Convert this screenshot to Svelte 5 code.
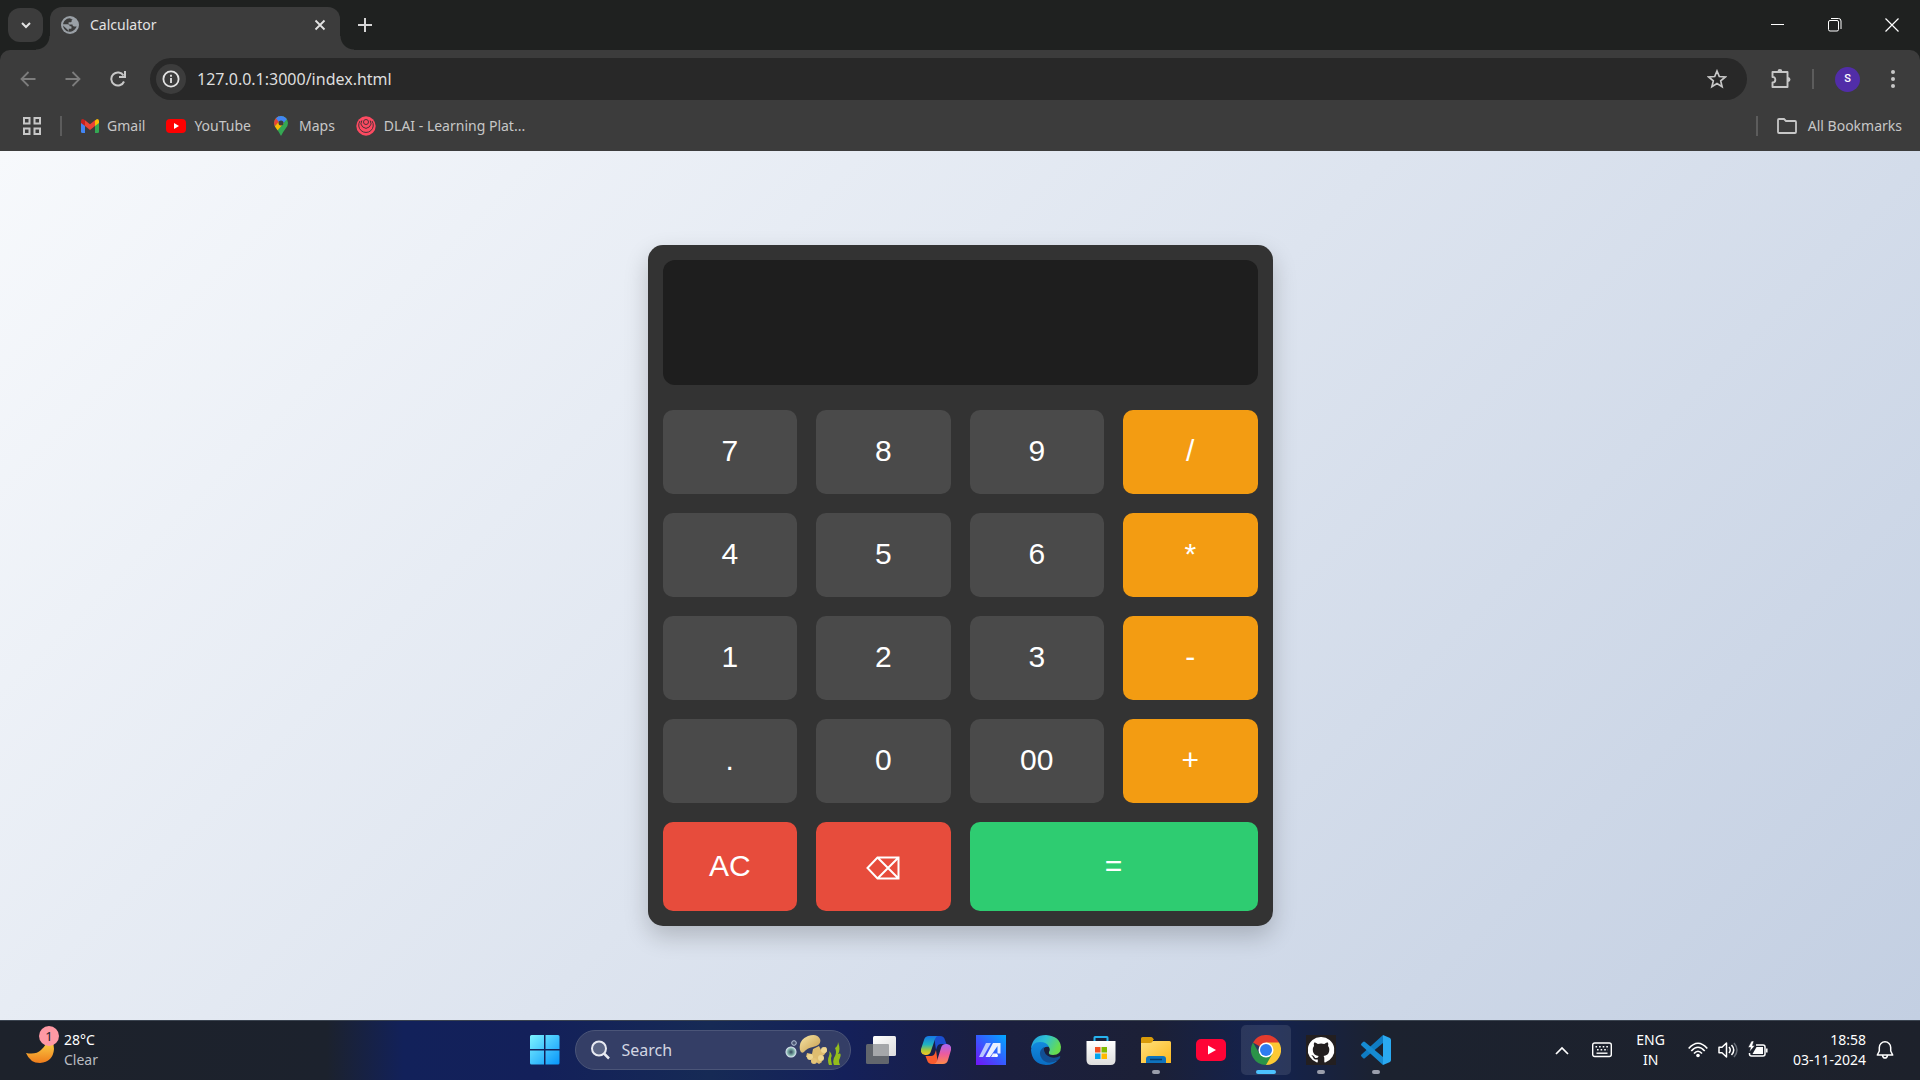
<script>
  const keys = [
    ['7', 'num'], ['8', 'num'], ['9', 'num'], ['/', 'op'],
    ['4', 'num'], ['5', 'num'], ['6', 'num'], ['*', 'op'],
    ['1', 'num'], ['2', 'num'], ['3', 'num'], ['-', 'op'],
    ['.', 'num'], ['0', 'num'], ['00', 'num'], ['+', 'op'],
    ['AC', 'clear'], ['⌫', 'clear back'], ['=', 'equals']
  ];

  let expression = $state('');

  // Evaluates left to right with * and / binding tighter than + and -.
  function evaluate(source) {
    const tokens = source.match(/\d*\.?\d+|[-+*/]/g) ?? [];
    const terms = [];
    let sign = 1;
    let pending = null;
    for (const token of tokens) {
      if (token === '+' || token === '-') sign = token === '-' ? -1 : 1;
      else if (token === '*' || token === '/') pending = token;
      else {
        const value = Number(token);
        if (pending === '*') terms.push(terms.pop() * value);
        else if (pending === '/') terms.push(terms.pop() / value);
        else terms.push(sign * value);
        pending = null;
        sign = 1;
      }
    }
    return String(terms.reduce((sum, term) => sum + term, 0));
  }

  function press(key) {
    if (key === 'AC') expression = '';
    else if (key === '⌫') expression = expression.slice(0, -1);
    else if (key === '=') expression = expression && evaluate(expression);
    else expression += key;
  }
</script>

<div class="screen">
  <header class="browser">
    <div class="tabstrip">
      <button class="tab-search" aria-label="Search tabs">
        <svg width="12" height="12" viewBox="0 0 12 12"><path d="M2 4l4 4 4-4" fill="none" stroke="#e3e3e3" stroke-width="2" /></svg>
      </button>
      <div class="tab">
        <svg width="18" height="18" viewBox="0 0 18 18">
          <circle cx="9" cy="9" r="9" fill="#9aa0a6" />
          <path d="M8.500 2.200C5 2.500 2.500 5 2 8.500h4.500c1.500 0 2 .8 2 2h1.800v2H7.500v3.300c3.500 .4 7-2 8.200-5.300h-2.400c-1.200 0-1.800-.8-1.800-2H7.600V6.200h1.600c1 0 1.500-.5 1.500-1.500V3.500h1.500" fill="#3c3c3c" />
          <path d="M2 8.500h4.500c1.500 0 2 .8 2 2h1.800v2H7.500v3.300C4 15.200 1.800 12 2 8.500z" fill="#9aa0a6" />
          <path d="M2 9.500l5.500 5v1.300C4.500 15 2.300 12.500 2 9.500z" fill="#3c3c3c" />
        </svg>
        <span class="tab-title">Calculator</span>
        <button class="plain" aria-label="Close tab">
          <svg width="12" height="12" viewBox="0 0 12 12"><path d="M1.500 1.500l9 9m0-9l-9 9" stroke="#e3e3e3" stroke-width="1.800" /></svg>
        </button>
      </div>
      <button class="plain new-tab" aria-label="New tab">
        <svg width="14" height="14" viewBox="0 0 14 14"><path d="M7 0v14M0 7h14" stroke="#d6d6d6" stroke-width="2" /></svg>
      </button>
      <div class="window-controls">
        <button aria-label="Minimize"><svg width="14" height="14" viewBox="0 0 14 14"><path d="M0 6.500h13" stroke="#fff" /></svg></button>
        <button aria-label="Restore"><svg width="14" height="14" viewBox="0 0 14 14" fill="none" stroke="#fff"><rect x=".5" y="2.500" width="10" height="10.500" rx="1.500" /><path d="M3 .5h7.500q2.500 0 2.500 2.500v8" /></svg></button>
        <button aria-label="Close"><svg width="14" height="14" viewBox="0 0 14 14"><path d="M.5 .5l13 13m0-13l-13 13" stroke="#fff" stroke-width="1.200" /></svg></button>
      </div>
    </div>

    <div class="panel">
      <div class="toolbar">
        <nav class="nav" aria-label="History">
          <button class="plain" aria-label="Back"><svg width="16" height="16" viewBox="0 0 16 16" fill="none" stroke="#7d7d7d" stroke-width="1.800"><path d="M15.500 8H2M8.500 1L1.500 8l7 7" /></svg></button>
          <button class="plain" aria-label="Forward"><svg width="16" height="16" viewBox="0 0 16 16" fill="none" stroke="#7d7d7d" stroke-width="1.800"><path d="M.5 8H14M7.500 1l7 7-7 7" /></svg></button>
          <button class="plain" aria-label="Reload"><svg width="16" height="16" viewBox="0 0 16 16" fill="none" stroke="#c7c7c7" stroke-width="2"><path d="M14 10.500A6.600 6.600 0 1 1 13.500 4.500M15 0v6H9" /></svg></button>
        </nav>
        <div class="address">
          <button class="site-info" aria-label="Site information">
            <svg width="18" height="18" viewBox="0 0 18 18"><circle cx="9" cy="9" r="7.600" fill="none" stroke="#e3e3e3" stroke-width="1.800" /><path d="M9 8v5M9 4.800v2" stroke="#e3e3e3" stroke-width="1.800" /></svg>
          </button>
          <input aria-label="Address" value="127.0.0.1:3000/index.html" />
          <button class="plain" aria-label="Bookmark this tab">
            <svg width="20" height="20" viewBox="0 0 20 20"><path d="M10 2l2.300 5.500 6 .5-4.600 3.900 1.400 5.800L10 14.600l-5.100 3.100 1.400-5.800L1.700 8l6-.5z" fill="none" stroke="#c7c7c7" stroke-width="1.700" /></svg>
          </button>
        </div>
        <button class="plain extensions" aria-label="Extensions">
          <svg width="22" height="22" viewBox="0 0 22 22"><path d="M2.500 4h15v15h-15v-4.500q2.800 0 2.800-2.800T2.500 9z" fill="none" stroke="#c7c7c7" stroke-width="1.900" stroke-linejoin="round" /><path d="M7.500 3.500a2.400 2.400 0 0 1 4.800 0zM18 9a2.500 2.500 0 0 1 0 5z" fill="#c7c7c7" /></svg>
        </button>
        <span class="rule"></span>
        <button class="avatar" aria-label="Profile">S</button>
        <button class="plain menu" aria-label="Menu">
          <svg width="6" height="20" viewBox="0 0 6 20" fill="#c7c7c7"><circle cx="3" cy="3" r="2" /><circle cx="3" cy="10" r="2" /><circle cx="3" cy="17" r="2" /></svg>
        </button>
      </div>

      <nav class="bookmarks" aria-label="Bookmarks">
        <button class="plain" aria-label="Apps">
          <svg width="18" height="18" viewBox="0 0 18 18" fill="none" stroke="#c7c7c7" stroke-width="2"><path d="M1 1h5.500v5.500H1zM11.500 1H17v5.500h-5.500zM1 11.500h5.500V17H1zM11.500 11.500H17V17h-5.500z" /></svg>
        </button>
        <span class="rule"></span>
        <a href="#gmail">
          <svg width="18" height="14" viewBox="0 0 18 14"><path d="M0 3v9.500Q0 14 1.300 14H4V6z" fill="#4285f4" /><path d="M18 3v9.500q0 1.500-1.300 1.500H14V6z" fill="#34a853" /><path d="M14 1.500V7l4-3V2q0-2-2-2z" fill="#fbbc04" /><path d="M0 2q0-2 2-1.900L4 1.300V7L0 4z" fill="#c5221f" /><path d="M4 1.300l5 3.900 5-3.900V7l-5 4-5-4z" fill="#ea4335" /></svg>
          Gmail
        </a>
        <a href="#youtube">
          <svg width="20" height="14" viewBox="0 0 20 14"><rect width="20" height="14" rx="4" fill="#f00" /><path d="M8 4l5 3-5 3z" fill="#fff" /></svg>
          YouTube
        </a>
        <a href="#maps" class="maps">
          <svg width="14" height="20" viewBox="0 0 14 20"><defs><clipPath id="pin"><path d="M7 0a7 7 0 0 1 7 7q0 3-2.500 5.800Q9 16 7 20 5 16 2.500 12.800 0 10 0 7a7 7 0 0 1 7-7z" /></clipPath></defs><g clip-path="url(#pin)"><path d="M0 0h14v20H0z" fill="#34a853" /><path d="M0 11L5 5l5 2-7 8z" fill="#fbbc04" /><path d="M0 0h5v5.500L0 11z" fill="#ea4335" /><path d="M2 2.500L4 0h10v2L7.500 9z" fill="#4285f4" /></g><circle cx="7" cy="7" r="2.500" fill="#3c3c3c" /></svg>
          Maps
        </a>
        <a href="#dlai">
          <svg width="20" height="20" viewBox="0 0 20 20"><circle cx="10" cy="10" r="9.700" fill="#fd4a61" /><g fill="none" stroke="#4a3238" stroke-width="1"><path d="M4 5a7.300 7.300 0 1 0 12 0" /><path d="M5.800 4.500a5 5 0 1 0 8.400 0" /><circle cx="10" cy="6" r="2.500" /></g></svg>
          DLAI - Learning Plat...
        </a>
        <span class="rule push"></span>
        <a href="#all" class="all">
          <svg width="20" height="16" viewBox="0 0 20 16"><path d="M1 13V2q0-1 1-1h5l2 2h9q1 0 1 1v10q0 1-1 1H2q-1 0-1-1z" fill="none" stroke="#c7c7c7" stroke-width="1.800" /></svg>
          All Bookmarks
        </a>
      </nav>
    </div>
  </header>

  <main class="page">
    <section class="calculator" aria-label="Calculator">
      <output class="display">{expression}</output>
      <div class="keypad">
        {#each keys as [label, kind]}
          <button class={kind} onclick={() => press(label)}>
            {#if label === '⌫'}
              <svg width="34" height="24" viewBox="0 0 34 24" role="img" aria-label="Backspace"><path d="M1.500 12L11.500 1.500H32.500v21H11.500zM11.500 1.500l21 21M32.500 1.500l-21 21" fill="none" stroke="#fff" stroke-width="2" /></svg>
            {:else}{label}{/if}
          </button>
        {/each}
      </div>
    </section>
  </main>

  <footer class="taskbar">
    <button class="weather">
      <span class="moon">
        <svg width="28" height="28" viewBox="0 0 28 28"><defs><linearGradient id="moon" x2="0" y2="1"><stop offset=".3" stop-color="#f8c440" /><stop offset="1" stop-color="#ef7d1c" /></linearGradient></defs><path d="M22 1Q28 5 28 13 27 26 14 27 4 27 0 17q10 2 15-3 6-5 7-13z" fill="url(#moon)" /></svg>
        <span class="badge">1</span>
      </span>
      <span class="stack"><span>28°C</span><span class="dim">Clear</span></span>
    </button>

    <div class="apps">
      <button class="app" aria-label="Start">
        <svg width="30" height="30" viewBox="0 0 30 30"><defs><linearGradient id="win" x2="1" y2="1"><stop stop-color="#7df3ff" /><stop offset="1" stop-color="#0795fb" /></linearGradient></defs><path d="M1.500 0H14v14H0V1.500Q0 0 1.500 0zM15.500 0H28q1.500 0 1.500 1.500V14h-14zM0 15.500h14v14H1.500Q0 29.500 0 28zM15.500 15.500h14V28q0 1.500-1.500 1.500H15.500z" fill="url(#win)" /></svg>
      </button>
      <label class="search">
        <svg width="20" height="20" viewBox="0 0 20 20" fill="none" stroke="#e8eaf2" stroke-width="2"><circle cx="9" cy="8.500" r="7" fill="#5b6585" /><path d="M14 13.500l5 5" stroke-width="2.500" /></svg>
        <input type="text" placeholder="Search" aria-label="Search" />
        <svg width="56" height="32" viewBox="0 0 56 32">
          <defs><linearGradient id="cap" x2="1" y2="1"><stop stop-color="#f7e6a6" /><stop offset="1" stop-color="#c79b4c" /></linearGradient><radialGradient id="bubble"><stop stop-color="#33475c" /><stop offset=".6" stop-color="#7fb0a8" /><stop offset="1" stop-color="#e6eefb" /></radialGradient></defs>
          <circle cx="6" cy="18" r="5.500" fill="url(#bubble)" /><circle cx="9" cy="9" r="2.300" fill="#4a5674" stroke="#b9c8dc" />
          <path d="M28 15l6-3 2 4 5-3 1 4-3 4-4 2 2 5-3 2-3-2-4 1-1-5-5-1 1-4 5 1z" fill="#dfbd70" />
          <circle cx="25" cy="23" r="3" fill="#efd691" /><circle cx="36" cy="24" r="3" fill="#efd691" /><circle cx="39" cy="16" r="3" fill="#efd691" /><circle cx="29" cy="27" r="3" fill="#e5c478" />
          <path d="M15 16Q13 6 23 2q9-3 12 3 2 6-7 8-6 1-9 5-3 2-4-2z" fill="url(#cap)" />
          <path d="M44 31q-2-5 0-9 1-3 0-5 4 3 2 7 0 3 1 7zM49 31q-2-5 1-9 2-4 0-8 3-2 3-6 3 8 0 12 4-2 2 4-2 3 0 7z" fill="#93bd1c" />
        </svg>
      </label>
      <button class="app" aria-label="Task view">
        <svg width="30" height="28" viewBox="0 0 30 28"><defs><linearGradient id="tv" x2="1" y2="1"><stop stop-color="#fff" /><stop offset="1" stop-color="#dcdcdc" /></linearGradient></defs><rect y="8" width="23" height="20" rx="1.500" fill="#62666d" /><rect x="7" width="23" height="20" rx="1.500" fill="url(#tv)" /><path d="M7 8h15q1 0 1 1v11H7z" fill="#a5a7aa" /></svg>
      </button>
      <button class="app" aria-label="Copilot">
        <svg width="30" height="28" viewBox="0 0 30 28"><defs><linearGradient id="cp1" x2="0" y2="1"><stop stop-color="#1677e6" /><stop offset=".45" stop-color="#20b3c0" /><stop offset=".75" stop-color="#a9c837" /><stop offset="1" stop-color="#f9c725" /></linearGradient><linearGradient id="cp2" x2="0" y2="1"><stop stop-color="#a766f5" /><stop offset=".5" stop-color="#ec5b9d" /><stop offset="1" stop-color="#ff8a4a" /></linearGradient></defs>
          <path d="M13 0h6q4 0 5 4l1.500 4H20q-3 0-4 3l-1 3z" fill="#1b4fd0" /><path d="M17 28h-6q-4 0-5-4l-1.500-4H10q3 0 4-3l1-3z" fill="#fb5c2e" />
          <path d="M8 0h9q-2 0-3 3l-4 12q-1 4-5 4H4Q-1 18 0 13L3 4Q4 0 8 0z" fill="url(#cp1)" /><path d="M22 28h-9q2 0 3-3l4-13q1-4 5-4h1q5 1 4 6l-3 10q-1 4-5 4z" fill="url(#cp2)" /></svg>
      </button>
      <button class="app" aria-label="MyASUS">
        <svg width="30" height="30" viewBox="0 0 30 30"><defs><linearGradient id="asus" x1="1" x2="0" y2="1"><stop stop-color="#00a9ff" /><stop offset=".5" stop-color="#355cff" /><stop offset="1" stop-color="#7412f5" /></linearGradient></defs><path d="M0 0h30v30H0z" fill="url(#asus)" /><path d="M3 22L10 8h5L7 22z" fill="#b9c8ff" /><path d="M9.500 22L17 8h7.500v10.500h-3V11L14 22zM17 18.500h4V22h-6z" fill="#eaf0ff" /><circle cx="20.500" cy="20.500" r="1.500" fill="#fff" /></svg>
      </button>
      <button class="app" aria-label="Edge">
        <svg width="30" height="30" viewBox="0 0 30 30"><defs><linearGradient id="eg1" x2="1" y2=".4"><stop stop-color="#1f9ae0" /><stop offset=".5" stop-color="#2fc2d2" /><stop offset="1" stop-color="#66dc4f" /></linearGradient><linearGradient id="eg2" x2="0" y2="1"><stop stop-color="#128ade" /><stop offset="1" stop-color="#0a6cc2" /></linearGradient></defs><path d="M0 13Q2 0 15 0q14 1 15 12 0 8-8 8-5 0-4-3 2-3-1-6Q12 5 0 13z" fill="url(#eg1)" /><path d="M0 15Q1 7 9 7q7 0 9 5-5-1-6 3-1 8 8 11 4 1 7-1-4 5-12 5Q1 29 0 15z" fill="url(#eg2)" /><path d="M13 12q-7 5-2 12 6 7 16 1 3-2 2-4-5 3-10 1-7-3-6-10z" fill="#124f95" /></svg>
      </button>
      <button class="app" aria-label="Microsoft Store">
        <svg width="30" height="30" viewBox="0 0 30 30"><defs><linearGradient id="st" x2="0" y2="1"><stop stop-color="#fff" /><stop offset="1" stop-color="#dedede" /></linearGradient></defs><path d="M8.500 7V2.500Q8.500 2 9 2h12q.5 0 .5 .5V7" fill="none" stroke="#27b3ee" stroke-width="2" /><path d="M.5 6h29v19q0 5-5 5h-19q-5 0-5-5z" fill="url(#st)" /><path d="M9 12h5.500v5.500H9z" fill="#f25022" /><path d="M15.500 12H21v5.500h-5.500z" fill="#7fba00" /><path d="M9 18.500h5.500V24H9z" fill="#00a4ef" /><path d="M15.500 18.500H21V24h-5.500z" fill="#ffb900" /></svg>
      </button>
      <button class="app open" aria-label="File Explorer">
        <svg width="30" height="26" viewBox="0 0 30 26"><defs><linearGradient id="fe" x2="1" y2="1"><stop stop-color="#ffe07c" /><stop offset="1" stop-color="#fdb81e" /></linearGradient></defs><path d="M0 1.500Q0 0 1.500 0H10q1 0 2 1.200L13 3h-1v6H0z" fill="#d99b0a" /><path d="M0 6h9q2 0 3-2h16.500Q30 4 30 5.500V26H0z" fill="url(#fe)" /><path d="M5 26v-4q0-3 3-3h14q3 0 3 3v4z" fill="#0f73bd" /><path d="M9 22.500h12" stroke="#073b6b" stroke-width="1.500" /></svg>
      </button>
      <button class="app" aria-label="YouTube">
        <svg width="30" height="22" viewBox="0 0 30 22"><rect width="30" height="22" rx="5" fill="#ff0436" /><path d="M12 6.500l8 4.500-8 4.500z" fill="#fff" /></svg>
      </button>
      <button class="app open active" aria-label="Chrome">
        <svg width="30" height="30" viewBox="0 0 30 30"><path d="M15 15L2 7.500a15 15 0 0 1 26 0z" fill="#e33b2e" /><path d="M15 7.500h13A15 15 0 0 1 15 30z" fill="#fcc934" /><path d="M15 15l6.500 3.700L15 30A15 15 0 0 1 2 7.500l6.500 11.200z" fill="#2b9348" /><circle cx="15" cy="15" r="7.500" fill="#fff" /><circle cx="15" cy="15" r="6" fill="#2f7cf0" /></svg>
      </button>
      <button class="app open" aria-label="GitHub">
        <svg width="30" height="30" viewBox="0 0 30 30"><path d="M0 0h30v30H0z" fill="#231f20" /><path d="M15 2a13 13 0 0 0-4.100 25.400c.6 .1 .9-.3 .9-.6v-2.400c-3.600 .8-4.400-1.500-4.400-1.500-.6-1.500-1.400-1.900-1.400-1.900-1.200-.8 .1-.8 .1-.8 1.300 .1 2 1.300 2 1.300 1.200 2 3.100 1.400 3.800 1.100 .1-.8 .5-1.400 .8-1.700-2.900-.3-5.900-1.500-5.900-6.400 0-1.400 .5-2.600 1.300-3.500-.1-.3-.6-1.700 .1-3.400 0 0 1.100-.4 3.600 1.300a12.500 12.500 0 0 1 6.500 0c2.500-1.700 3.600-1.300 3.600-1.300 .7 1.800 .2 3.100 .1 3.400 .8 .9 1.300 2.100 1.300 3.500 0 5-3 6.100-5.900 6.400 .5 .4 .9 1.200 .9 2.400v3.500c0 .3 .2 .8 .9 .6A13 13 0 0 0 15 2z" fill="#fff" /></svg>
      </button>
      <button class="app open" aria-label="Visual Studio Code">
        <svg width="30" height="30" viewBox="0 0 30 30"><path d="M22 0l7 3q1 1 1 2v20q0 1-1 2l-7 3z" fill="#2aa9f1" /><path d="M22 0v8L4 23q-1 1-2 0l-1.500-1.500q-1-1 0-2z" fill="#0f7cc4" /><path d="M22 30v-8L4 7Q3 6 2 7L.5 8.500q-1 1 0 2z" fill="#168bd2" /></svg>
      </button>
    </div>

    <div class="tray">
      <button class="plain" aria-label="Hidden icons"><svg width="14" height="9" viewBox="0 0 14 9"><path d="M1 8l6-6 6 6" fill="none" stroke="#fff" stroke-width="1.700" /></svg></button>
      <button class="plain keyboard" aria-label="Touch keyboard"><svg width="20" height="16" viewBox="0 0 20 16" fill="none" stroke="#fff" stroke-width="1.400"><rect x=".7" y="1" width="18.600" height="13.500" rx="2" /><path d="M3.500 4.700h13M5 7.700h11" stroke-dasharray="1.600 2" stroke-width="1.600" /><path d="M4.500 11.200h11" /></svg></button>
      <button class="plain stack language"><span>ENG</span><span>IN</span></button>
      <button class="plain status" aria-label="Network, volume and battery">
        <svg width="20" height="16" viewBox="0 0 20 16" fill="none" stroke="#fff" stroke-width="1.700"><path d="M.7 6.500q9.300-10.500 18.600 0M3.300 9q6.700-7.500 13.400 0M6 11.500q4-4.500 8 0" /><circle cx="10" cy="13.500" r="1.800" fill="#fff" stroke="none" /></svg>
        <svg width="20" height="18" viewBox="0 0 20 18" fill="none" stroke="#fff" stroke-width="1.500"><path d="M1 6.200h3L8.500 2v14L4 11.800H1z" stroke-linejoin="round" /><path d="M11 6q2.500 3 0 6M13.500 4q4.500 5 0 10" /><path d="M16 2q6 7 0 14" stroke="#666b75" /></svg>
        <svg width="20" height="18" viewBox="0 0 20 18" fill="none" stroke="#fff" stroke-width="1.500"><path d="M8 4h7q2 0 2 2v7q0 2-2 2H3.500q-2 0-2-2v-1M18.800 7.500v4" /><path d="M8.500 6H15v7H4.500z" fill="#fff" stroke="none" /><path d="M3.500 0L0 6.500h2.500L1.500 11 7 4.500H4.500L6 0z" fill="#fff" stroke="#1d212b" stroke-width=".6" /></svg>
      </button>
      <button class="plain stack clock"><span>18:58</span><span>03-11-2024</span></button>
      <button class="plain bell" aria-label="Notifications"><svg width="18" height="20" viewBox="0 0 18 20" fill="none" stroke="#fff" stroke-width="1.500"><path d="M3.300 11V7.500a5.700 5.700 0 0 1 11.400 0V11l2 4H1.300zM6.500 15.500q.5 2.500 2.500 2.500t2.500-2.500" stroke-linejoin="round" /></svg></button>
    </div>
  </footer>
</div>

<style>
  :global(body) {
    margin: 0;
  }

  .screen {
    display: flex;
    flex-direction: column;
    min-height: 100vh;
    font-family: "Noto Sans", "Open Sans", sans-serif;
    font-size: 14px;
    line-height: 20px;
    color: #fff;
  }

  .screen :is(button, input) {
    margin: 0;
    padding: 0;
    border: 0;
    background: none;
    color: inherit;
    font: inherit;
  }

  svg {
    display: block;
    flex: none;
  }

  .browser {
    background: #1f2120;
    color: #c7c7c7;
  }

  .panel {
    border-radius: 10px 10px 0 0;
    background: #3c3c3c;
  }

  .tabstrip {
    display: flex;
    align-items: center;
    height: 50px;
    padding-left: 8px;
  }

  .screen .tab-search {
    display: grid;
    place-items: center;
    width: 35px;
    height: 34px;
    border-radius: 12px;
    background: #3c3c3c;
  }

  .tab {
    position: relative;
    align-self: flex-end;
    display: flex;
    align-items: center;
    gap: 11px;
    box-sizing: border-box;
    width: 290px;
    height: 43px;
    margin-left: 7px;
    padding: 0 14px 7px 11px;
    border-radius: 12px 12px 0 0;
    background: #3c3c3c;
    color: #e3e3e3;
  }

  .tab::before,
  .tab::after {
    content: "";
    position: absolute;
    bottom: 0;
    width: 14px;
    height: 14px;
  }

  .tab::before {
    right: 100%;
    background: radial-gradient(circle at 0 0, transparent 13px, #3c3c3c 14px);
  }

  .tab::after {
    left: 100%;
    background: radial-gradient(circle at 100% 0, transparent 13px, #3c3c3c 14px);
  }

  .tab-title {
    flex: 1;
  }

  .screen .new-tab {
    margin-left: 18px;
  }

  .window-controls {
    display: flex;
    align-self: stretch;
    margin-left: auto;
  }

  .window-controls button {
    display: grid;
    place-items: center;
    width: 57px;
  }

  .toolbar {
    display: flex;
    align-items: center;
    height: 58px;
    padding: 0 24px 0 20px;
  }

  .nav {
    display: flex;
    gap: 29px;
    width: 130px;
  }

  .address {
    flex: 1;
    display: flex;
    align-items: center;
    height: 42px;
    box-sizing: border-box;
    padding: 0 20px 0 6px;
    border-radius: 21px;
    background: #282828;
  }

  .screen .site-info {
    display: grid;
    place-items: center;
    width: 30px;
    height: 30px;
    border-radius: 50%;
    background: #3c3c3c;
  }

  .screen .address input {
    flex: 1;
    min-width: 0;
    margin-left: 11px;
    font-size: 16px;
    color: #dedede;
    outline: none;
  }

  .screen .extensions {
    margin: 0 20px 0 23px;
  }

  .rule {
    flex: none;
    width: 2px;
    height: 20px;
    background: #5c5c5c;
  }

  .screen .avatar {
    width: 25px;
    height: 25px;
    margin-left: 21px;
    border-radius: 50%;
    background: #512da8;
    color: #fff;
    font-family: Roboto, sans-serif;
    font-size: 11px;
    font-weight: 500;
  }

  .screen .menu {
    margin-left: 30px;
  }

  .bookmarks {
    display: flex;
    align-items: center;
    height: 36px;
    padding: 0 18px 7px 23px;
  }

  .bookmarks .rule {
    margin: 0 19px;
  }

  .bookmarks a {
    display: flex;
    align-items: center;
    gap: 8px;
    margin-right: 21px;
    color: inherit;
    text-decoration: none;
    white-space: nowrap;
  }

  .bookmarks .maps {
    gap: 11px;
    margin-left: 2px;
  }

  .bookmarks .push {
    margin-left: auto;
  }

  .bookmarks .all {
    gap: 11px;
    margin-right: 0;
  }

  .page {
    flex: 1;
    display: grid;
    place-items: center;
    padding: 40px 20px;
    background: linear-gradient(135deg, #f7f9fc 0%, #c3cfe2 100%);
  }

  .calculator {
    box-sizing: border-box;
    width: 100%;
    max-width: 625px;
    padding: 15px;
    border-radius: 15px;
    background: #333;
    box-shadow: 0 10px 25px rgba(0, 0, 0, 0.2);
    font-family: "Liberation Sans", Arial, sans-serif;
  }

  .display {
    display: flex;
    align-items: center;
    justify-content: flex-end;
    box-sizing: border-box;
    height: 125px;
    margin-bottom: 25px;
    padding: 0 25px;
    border-radius: 12px;
    background: #1e1e1e;
    font-size: 48px;
    overflow: hidden;
  }

  .keypad {
    display: grid;
    grid-template-columns: repeat(4, 1fr);
    grid-template-rows: repeat(4, 84px) 89px;
    gap: 19px;
  }

  .screen .keypad button {
    display: grid;
    place-items: center;
    padding-bottom: 2px;
    border-radius: 10px;
    background: #4a4a4a;
    font-size: 30px;
    line-height: 34px;
    cursor: pointer;
  }

  .screen .keypad .op {
    background: #f39c12;
  }

  .screen .keypad .clear {
    background: #e74c3c;
  }

  .screen .keypad .back {
    padding: 2px 0 0;
  }

  .screen .keypad .equals {
    grid-column: span 2;
    background: #2ecc71;
  }

  .taskbar {
    display: grid;
    grid-template-columns: 1fr auto 1fr;
    align-items: center;
    height: 60px;
    box-sizing: border-box;
    padding-bottom: 1px;
    border-top: 1px solid #3b4450;
    background: linear-gradient(90deg, #1d222b 0%, #1c222d 17%, #12215a 21%, #13205a 28%, #162a55 37%, #14205a 44%, #1b1f3f 52%, #1c2036 60%, #13224f 66%, #1c222f 72%, #1d212b 100%);
  }

  .weather {
    display: flex;
    align-items: center;
    justify-self: start;
  }

  .screen .weather {
    gap: 10px;
    padding-left: 26px;
  }

  .moon {
    position: relative;
  }

  .badge {
    position: absolute;
    top: -10px;
    right: -5px;
    width: 20px;
    height: 20px;
    border-radius: 50%;
    background: #ff99a4;
    color: #1d212b;
    font-size: 13px;
  }

  .stack {
    display: flex;
    flex-direction: column;
    text-align: left;
  }

  .dim {
    color: #b9bcc1;
  }

  .apps {
    display: flex;
    align-items: center;
    gap: 5px;
  }

  .screen .app {
    position: relative;
    display: grid;
    place-items: center;
    width: 50px;
    height: 50px;
    border-radius: 5px;
  }

  .screen .active {
    background: rgba(255, 255, 255, 0.1);
  }

  .open::after {
    content: "";
    position: absolute;
    bottom: 1px;
    left: 21px;
    width: 8px;
    height: 4px;
    border-radius: 2px;
    background: #9a9eab;
  }

  .active::after {
    left: 15px;
    width: 20px;
    background: #4cc2ff;
  }

  .search {
    display: flex;
    align-items: center;
    gap: 12px;
    box-sizing: border-box;
    width: 276px;
    height: 40px;
    padding: 0 9px 0 14px;
    border: 1px solid #4b5578;
    border-radius: 20px;
    background: #343e66;
  }

  .screen .search input {
    flex: 1;
    min-width: 0;
    font-size: 16px;
    outline: none;
  }

  .search input::placeholder {
    color: #d3d6e2;
    opacity: 1;
  }

  .tray {
    display: flex;
    align-items: center;
    justify-self: end;
    padding-right: 26px;
  }

  .screen .keyboard {
    margin-left: 23px;
  }

  .screen .language {
    align-items: center;
    margin: 0 23px 0 24px;
  }

  .status {
    display: flex;
    align-items: center;
    gap: 10px;
  }

  .screen .clock {
    align-items: flex-end;
    margin-left: 25px;
  }

  .screen .bell {
    margin-left: 10px;
  }
</style>
